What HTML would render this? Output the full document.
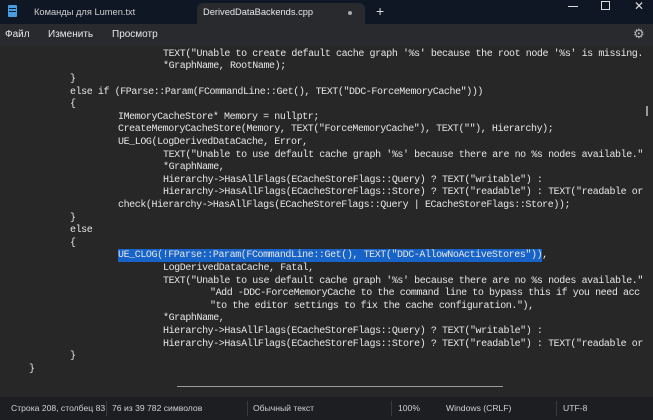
<!DOCTYPE html>
<html><head><meta charset="utf-8"><style>
*{margin:0;padding:0;box-sizing:border-box}
body{width:653px;height:420px;overflow:hidden;background:#272727;font-family:"Liberation Sans",sans-serif;position:relative}
#title{position:absolute;left:0;top:0;width:653px;height:24px;background:#0f1724}
#tab{position:absolute;left:197px;top:3px;width:168px;height:21px;background:#282a2e;border-radius:6px 6px 0 0}
.t{position:absolute;color:#e8e8e8;font-size:10px;white-space:nowrap}
#menu{position:absolute;left:0;top:24px;width:653px;height:22px;background:#282a2e}
#ed{position:absolute;left:0;top:46px;width:653px;height:351px;background:#272727}
.l{position:absolute;font-family:"Liberation Mono",monospace;font-size:10px;letter-spacing:-0.42px;color:#e6e6e6;white-space:pre;line-height:12.6px;height:12.6px}
#sb{position:absolute;left:0;top:397px;width:653px;height:23px;background:#1d1e22}
.s{position:absolute;top:6px;font-size:8.6px;color:#d0d0d0;white-space:nowrap}
.sep{position:absolute;top:4px;width:1px;height:15px;background:#3a3a3a}
</style></head><body>
<div id="title">
<div style="position:absolute;left:8px;top:5px;width:9px;height:12px;background:#4a9ee0;border-radius:1px"></div>
<div style="position:absolute;left:9px;top:8px;width:7px;height:1px;background:#123"></div>
<div style="position:absolute;left:9px;top:11px;width:7px;height:1px;background:#123"></div>
<div class="t" style="left:34px;top:7px;color:#cfcfcf;font-size:9.3px">Команды для Lumen.txt</div>
<div id="tab"></div>
<div class="t" style="left:203px;top:7px;font-size:9.3px">DerivedDataBackends.cpp</div>
<div style="position:absolute;left:348px;top:11px;width:4px;height:4px;border-radius:50%;background:#aaa"></div>
<div class="t" style="left:376px;top:3px;font-size:14px;color:#ddd">+</div>
<div style="position:absolute;left:568px;top:6px;width:10px;height:1px;background:#ddd"></div>
<div style="position:absolute;left:601px;top:1px;width:9px;height:9px;border:1px solid #ddd"></div>
<div class="t" style="left:634px;top:-1px;font-size:12px;color:#ddd">✕</div>
</div>
<div id="menu">
<div class="t" style="left:5px;top:5px">Файл</div>
<div class="t" style="left:48px;top:5px">Изменить</div>
<div class="t" style="left:112px;top:5px">Просмотр</div>
<div class="t" style="left:633px;top:2px;font-size:13px;color:#bbb">⚙</div>
</div>
<div id="ed">
<div style="position:absolute;left:118px;top:203px;width:424px;height:13px;background:#1763c7"></div>
<div style="position:absolute;left:646px;top:60px;width:2px;height:10px;background:#999"></div>
<div style="position:absolute;left:177px;top:340px;width:326px;height:1px;background:#9a9a9a"></div>
</div>
<div class="l" style="left:163px;top:48.7px">TEXT("Unable to create default cache graph '%s' because the root node '%s' is missing.</div>
<div class="l" style="left:163px;top:61.3px">*GraphName, RootName);</div>
<div class="l" style="left:70px;top:73.9px">}</div>
<div class="l" style="left:70px;top:86.5px">else if (FParse::Param(FCommandLine::Get(), TEXT("DDC-ForceMemoryCache")))</div>
<div class="l" style="left:70px;top:99.1px">{</div>
<div class="l" style="left:118px;top:111.7px">IMemoryCacheStore* Memory = nullptr;</div>
<div class="l" style="left:118px;top:124.3px">CreateMemoryCacheStore(Memory, TEXT("ForceMemoryCache"), TEXT(""), Hierarchy);</div>
<div class="l" style="left:118px;top:136.9px">UE_LOG(LogDerivedDataCache, Error,</div>
<div class="l" style="left:163px;top:149.5px">TEXT("Unable to use default cache graph '%s' because there are no %s nodes available."</div>
<div class="l" style="left:163px;top:162.1px">*GraphName,</div>
<div class="l" style="left:163px;top:174.7px">Hierarchy-&gt;HasAllFlags(ECacheStoreFlags::Query) ? TEXT("writable") :</div>
<div class="l" style="left:163px;top:187.3px">Hierarchy-&gt;HasAllFlags(ECacheStoreFlags::Store) ? TEXT("readable") : TEXT("readable or</div>
<div class="l" style="left:118px;top:199.9px">check(Hierarchy-&gt;HasAllFlags(ECacheStoreFlags::Query | ECacheStoreFlags::Store));</div>
<div class="l" style="left:70px;top:212.5px">}</div>
<div class="l" style="left:70px;top:225.1px">else</div>
<div class="l" style="left:70px;top:237.7px">{</div>
<div class="l" style="left:118px;top:250.3px">UE_CLOG(!FParse::Param(FCommandLine::Get(), TEXT("DDC-AllowNoActiveStores")),</div>
<div class="l" style="left:163px;top:262.9px">LogDerivedDataCache, Fatal,</div>
<div class="l" style="left:163px;top:275.5px">TEXT("Unable to use default cache graph '%s' because there are no %s nodes available."</div>
<div class="l" style="left:210px;top:288.1px">"Add -DDC-ForceMemoryCache to the command line to bypass this if you need acc</div>
<div class="l" style="left:210px;top:300.7px">"to the editor settings to fix the cache configuration."),</div>
<div class="l" style="left:163px;top:313.3px">*GraphName,</div>
<div class="l" style="left:163px;top:325.9px">Hierarchy-&gt;HasAllFlags(ECacheStoreFlags::Query) ? TEXT("writable") :</div>
<div class="l" style="left:163px;top:338.5px">Hierarchy-&gt;HasAllFlags(ECacheStoreFlags::Store) ? TEXT("readable") : TEXT("readable or</div>
<div class="l" style="left:70px;top:351.1px">}</div>
<div class="l" style="left:29px;top:363.7px">}</div>
<div id="sb">
<div class="s" style="left:11px">Строка 208, столбец 83</div>
<div class="sep" style="left:106px"></div>
<div class="s" style="left:112px">76 из 39 782 символов</div>
<div class="sep" style="left:247px"></div>
<div class="s" style="left:253px">Обычный текст</div>
<div class="sep" style="left:391px"></div>
<div class="s" style="left:398px">100%</div>
<div class="s" style="left:446px">Windows (CRLF)</div>
<div class="sep" style="left:556px"></div>
<div class="s" style="left:563px">UTF-8</div>
</div>
</body></html>
